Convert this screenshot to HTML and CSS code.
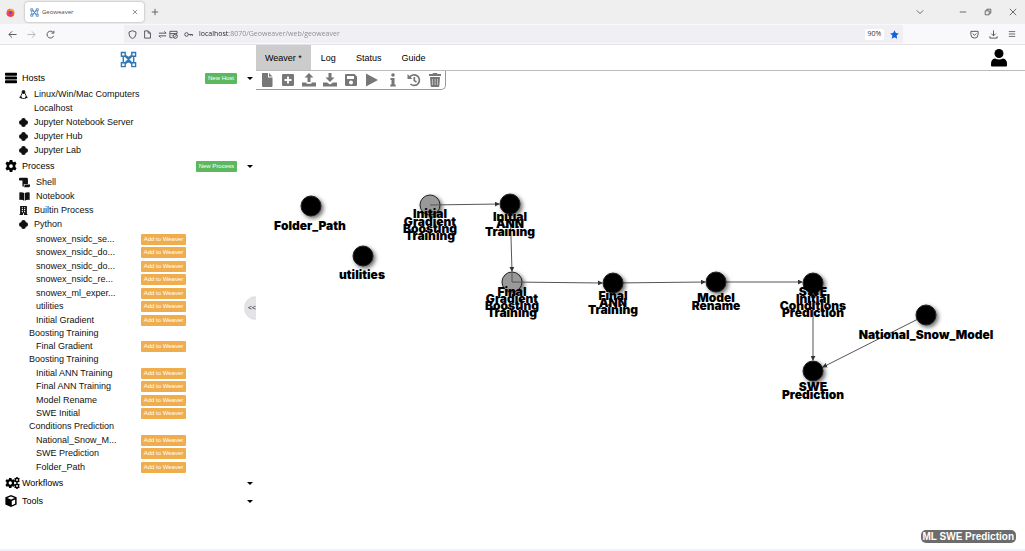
FILE: index.html
```html
<!DOCTYPE html>
<html lang="en">
<head>
<meta charset="utf-8">
<title>Geoweaver</title>
<link rel="stylesheet" href="styles.css">
</head>
<body>
<svg class="defs" aria-hidden="true">
  <symbol id="logo" viewBox="0 0 18 18"><g fill="none" stroke="currentColor" stroke-width="1.5"><path d="M1.5 1.5h4v4h-4zM12.500 1.5h4v4h-4zM1.500 12.500h4v4h-4zM12.500 12.500h4v4h-4zM3.500 5.500v7M14.500 5.500v7M5.500 5.500l7 7M12.500 5.500l-7 7M5.500 4.500l3.500 2.500 3.500-2.500M5.500 13.500l3.500-2.500 3.500 2.500"/></g></symbol>
  <symbol id="python" viewBox="0 0 16 16"><path d="M4 3.500Q4 0 8 0t4 3.500V4h.5Q16 4 16 8t-3.500 4H12v.5Q12 16 8 16t-4-3.500V12h-.5Q0 12 0 8t3.500-4H4z"/></symbol>
  <symbol id="cog" viewBox="0 0 16 16"><path fill-rule="evenodd" d="M6.300 0h3.400l.5 2.200 1.200.7 2.200-.8 1.800 3L13.800 6.600v2.800l1.600 1.500-1.800 3-2.200-.8-1.200.7-.5 2.200H6.300l-.5-2.200-1.200-.7-2.200.8-1.800-3 1.600-1.500V6.600L.6 5.100l1.800-3 2.200.8 1.200-.7zM8 5.500a2.500 2.500 0 1 0 0 5 2.500 2.500 0 0 0 0-5z"/></symbol>
</svg>

<header class="browser">
  <div class="tabstrip">
    <svg class="firefox" viewBox="0 0 16 16"><circle cx="8" cy="8.500" r="7" fill="#ff5a36"/><path d="M2 4l2-2 1 3 5-4q6 4 5 9-1-4-4-5z" fill="#ffbd2e"/><circle cx="8" cy="8.500" r="3.500" fill="#8a3fd1"/><path d="M1 8q0 7 7 7.500 5 0 6.500-4-4 3-8 1T1 8z" fill="#f5305b"/></svg>
    <div class="tab">
      <svg class="favicon" aria-hidden="true"><use href="#logo"/></svg>
      <span class="tab-title">Geoweaver</span>
      <button class="plain" aria-label="Close tab"><svg class="i6" viewBox="0 0 10 10"><path class="ln" d="M1.500 1.500l7 7M8.500 1.500l-7 7"/></svg></button>
    </div>
    <button class="plain new-tab" aria-label="New tab"><svg class="i8" viewBox="0 0 10 10"><path class="ln" d="M5 1v8M1 5h8"/></svg></button>
    <div class="window-controls">
      <button class="plain chevron" aria-label="List tabs"><svg class="i8" viewBox="0 0 10 10"><path class="ln" d="M1 3l4 4 4-4"/></svg></button>
      <button class="plain" aria-label="Minimize"><svg class="i8" viewBox="0 0 10 10"><path class="ln" d="M1 5h8"/></svg></button>
      <button class="plain" aria-label="Restore"><svg class="i8" viewBox="0 0 10 10"><path class="ln" d="M1.500 3.500h5v5h-5zM3.500 3V1.500h5v5H7"/></svg></button>
      <button class="plain" aria-label="Close"><svg class="i8" viewBox="0 0 10 10"><path class="ln" d="M1 1l8 8M9 1L1 9"/></svg></button>
    </div>
  </div>
  <div class="navbar">
    <div class="history">
      <button class="plain" aria-label="Back"><svg class="i9" viewBox="0 0 10 10"><path class="ln" d="M9.500 5H1M4.500 1.500L1 5l3.500 3.500"/></svg></button>
      <button class="plain faded" aria-label="Forward"><svg class="i9" viewBox="0 0 10 10"><path class="ln" d="M.5 5H9M5.500 1.500L9 5 5.500 8.500"/></svg></button>
      <button class="plain" aria-label="Reload"><svg class="i9" viewBox="0 0 10 10"><path class="ln" d="M8.500 6.500A3.800 3.800 0 1 1 8 2.800M8.800.8v2.700H6"/></svg></button>
    </div>
    <div class="urlbar">
      <svg class="i9" viewBox="0 0 10 10"><path class="ln" d="M5 .8l3.800 1.400v2.500Q8.800 8 5 9.500 1.200 8 1.200 4.700V2.200z"/></svg>
      <svg class="i9" viewBox="0 0 10 10"><path class="ln" d="M1.800 1h4l2.500 2.500V9H1.800zM5.800 1v2.500h2.500"/></svg>
      <svg class="i9" viewBox="0 0 10 10"><path class="ln" d="M1 3.500h8M7 1.500l2 2M9 6.500H1M3 8.500l-2-2"/></svg>
      <svg class="i9 snug" viewBox="0 0 10 10"><path class="ln" d="M4 8.500H1v-7h8V4M1 4h8M3 6h1"/><circle class="ln" cx="7" cy="7" r="2.300"/><path class="ln" d="M5.500 8.500l3-3"/></svg>
      <svg class="i9" viewBox="0 0 10 10"><circle class="ln" cx="2.800" cy="5" r="2"/><path class="ln" d="M4.800 5h4.700v1.500M7.500 5v1.500"/></svg>
      <input class="url" type="text" aria-label="Address" value="localhost:8070/Geoweaver/web/geoweaver">
      <button class="plain zoom">90%</button>
      <button class="plain star" aria-label="Bookmark"><svg class="i9" viewBox="0 0 20 20"><path fill="#0b61e0" d="M10 .5l3 6.300 6.700.8-5 4.800 1.300 6.900-6-3.400-6 3.400 1.300-6.900-5-4.800 6.700-.8z"/></svg></button>
    </div>
    <div class="nav-actions">
      <button class="plain" aria-label="Save to Pocket"><svg class="i9" viewBox="0 0 10 10"><path class="ln" d="M1 1.500h8v3.500a4 4 0 0 1-8 0zM3 4l2 2 2-2"/></svg></button>
      <button class="plain" aria-label="Downloads"><svg class="i9" viewBox="0 0 10 10"><path class="ln" d="M5 .5v6M2.500 4L5 6.500 7.500 4M1 7v2h8V7"/></svg></button>
      <button class="plain" aria-label="Menu"><svg class="i8" viewBox="0 0 10 10"><path class="ln" d="M1 2h8M1 5h8M1 8h8"/></svg></button>
    </div>
  </div>
</header>

<div class="app">
  <aside class="sidebar">
    <div class="brand"><svg class="brand-logo" aria-label="Geoweaver"><use href="#logo"/></svg></div>

    <div class="section">
      <svg class="i12" viewBox="0 0 16 16"><path d="M1 1h14q1 0 1 1v2q0 1-1 1H1Q0 5 0 4V2q0-1 1-1zM1 6h14q1 0 1 1v2q0 1-1 1H1q-1 0-1-1V7q0-1 1-1zM1 11h14q1 0 1 1v2q0 1-1 1H1q-1 0-1-1v-2q0-1 1-1z"/></svg>
      <span class="section-name">Hosts</span>
      <button class="btn green">New Host</button>
      <button class="plain caret" aria-label="Toggle Hosts"></button>
    </div>
    <ul class="tree">
      <li><svg class="i9" viewBox="0 0 16 16"><path fill="none" stroke="currentColor" stroke-width="1.500" d="M8 1q2.500 0 2.500 3.500 0 2 1.500 4.500t1 4L10 15H6l-3-2q-.5-1.500 1-4t1.500-4.500Q5.500 1 8 1z"/><path d="M5.500 1h5v5L8 7 5.500 6zM1 12l3-1 2 4-5-1zM15 12l-3-1-2 4 5-1z"/></svg><a href="#linux">Linux/Win/Mac Computers</a></li>
      <li class="no-icon"><a href="#localhost">Localhost</a></li>
      <li><svg class="i9"><use href="#python"/></svg><a href="#notebook-server">Jupyter Notebook Server</a></li>
      <li><svg class="i9"><use href="#python"/></svg><a href="#hub">Jupyter Hub</a></li>
      <li><svg class="i9"><use href="#python"/></svg><a href="#lab">Jupyter Lab</a></li>
    </ul>

    <div class="section">
      <svg class="i12"><use href="#cog"/></svg>
      <span class="section-name">Process</span>
      <button class="btn green">New Process</button>
      <button class="plain caret" aria-label="Toggle Process"></button>
    </div>
    <ul class="tree">
      <li><svg class="i11" viewBox="0 0 16 16"><path d="M0 2q0-1 2-1h9q2 0 2 2v7H7v3q0 1-1 1t-1-1V5H1Q0 5 0 3.500zM8 11h8v2q0 2-2 2H7q1-1 1-2z"/></svg><a href="#shell">Shell</a></li>
      <li><svg class="i11" viewBox="0 0 16 16"><path d="M.5 2Q5 1.500 7.500 3v11Q5 12.500 .5 13zM15.500 2Q11 1.500 8.500 3v11q2.500-1.500 7-1z"/></svg><a href="#nb">Notebook</a></li>
      <li><svg class="i9" viewBox="0 0 16 16"><path fill-rule="evenodd" d="M2 0h12v14h1v2H9v-3H7v3H1v-2h1zM5 2v2h2V2zM9 2v2h2V2zM5 5.500v2h2v-2zM9 5.500v2h2v-2zM5 9v2h2V9zM9 9v2h2V9z"/></svg><a href="#builtin">Builtin Process</a></li>
      <li><svg class="i9"><use href="#python"/></svg><a href="#python-list">Python</a></li>
    </ul>
    <ul class="processes" id="python-list">
      <li><a href="#p1">snowex_nsidc_se...</a><button class="btn orange">Add to Weaver</button></li>
      <li><a href="#p2">snowex_nsidc_do...</a><button class="btn orange">Add to Weaver</button></li>
      <li><a href="#p3">snowex_nsidc_do...</a><button class="btn orange">Add to Weaver</button></li>
      <li><a href="#p4">snowex_nsidc_re...</a><button class="btn orange">Add to Weaver</button></li>
      <li><a href="#p5">snowex_ml_exper...</a><button class="btn orange">Add to Weaver</button></li>
      <li><a href="#p6">utilities</a><button class="btn orange">Add to Weaver</button></li>
      <li><a href="#p7">Initial Gradient<br>Boosting Training</a><button class="btn orange">Add to Weaver</button></li>
      <li><a href="#p8">Final Gradient<br>Boosting Training</a><button class="btn orange">Add to Weaver</button></li>
      <li><a href="#p9">Initial ANN Training</a><button class="btn orange">Add to Weaver</button></li>
      <li><a href="#p10">Final ANN Training</a><button class="btn orange">Add to Weaver</button></li>
      <li><a href="#p11">Model Rename</a><button class="btn orange">Add to Weaver</button></li>
      <li><a href="#p12">SWE Initial<br>Conditions Prediction</a><button class="btn orange">Add to Weaver</button></li>
      <li><a href="#p13">National_Snow_M...</a><button class="btn orange">Add to Weaver</button></li>
      <li><a href="#p14">SWE Prediction</a><button class="btn orange">Add to Weaver</button></li>
      <li><a href="#p15">Folder_Path</a><button class="btn orange">Add to Weaver</button></li>
    </ul>

    <div class="section">
      <svg class="cogs" viewBox="0 0 20 16"><svg y="1" width="14" height="14"><use href="#cog"/></svg><svg x="12" y="0" width="8" height="8"><use href="#cog"/></svg><svg x="12" y="8" width="8" height="8"><use href="#cog"/></svg></svg>
      <span class="section-name">Workflows</span>
      <button class="plain caret" aria-label="Toggle Workflows"></button>
    </div>
    <div class="section">
      <svg class="i12" viewBox="0 0 16 16"><path fill-rule="evenodd" d="M8 0l7.500 3v9.500L8 16 .5 12.500V3zM8 2L3 4l5 2 5-2zM9 8v5.500l4.500-2V6z"/></svg>
      <span class="section-name">Tools</span>
      <button class="plain caret" aria-label="Toggle Tools"></button>
    </div>
    <button class="plain collapse" aria-label="Collapse sidebar">&lt;&lt;</button>
  </aside>

  <main class="main">
    <nav class="menu">
      <button class="plain menu-tab active">Weaver *</button>
      <button class="plain menu-tab">Log</button>
      <button class="plain menu-tab">Status</button>
      <button class="plain menu-tab">Guide</button>
      <button class="plain user" aria-label="Account"><svg class="user-icon" viewBox="0 0 16 18"><circle cx="8" cy="4.500" r="4.500"/><path d="M0 15q0-5 4-5.500 4 2 8 0 4 .5 4 5.500v1.500q0 1-1 1H1q-1 0-1-1z"/></svg></button>
    </nav>
    <div class="canvas">
      <svg class="graph" role="img" aria-label="ML SWE Prediction workflow">
        <defs>
          <marker id="arrow" viewBox="0 0 6 6" refX="5" refY="3" markerWidth="5" markerHeight="5" markerUnits="userSpaceOnUse" orient="auto"><path d="M0 0l6 3-6 3z" fill="#333"/></marker>
        </defs>
        <g class="nodes pending"><circle cx="174" cy="134" r="10"/><circle cx="256" cy="211" r="10"/></g>
        <g class="edges">
          <path d="M174 134L243 133"/><path d="M254 133L256 200"/><path class="tail" d="M256 200V211"/>
          <path d="M256 211L346 212"/><path d="M357 212L449 211"/><path d="M460 211L546 211"/>
          <path d="M557 211V289"/><path d="M670 244L567 296"/>
        </g>
        <g class="nodes">
          <circle cx="55" cy="135" r="10"/><circle cx="107" cy="185" r="10"/><circle cx="254" cy="133" r="10"/>
          <circle cx="357" cy="212" r="10"/><circle cx="460" cy="211" r="10"/><circle cx="557" cy="212" r="10"/>
          <circle cx="557" cy="300" r="10"/><circle cx="670" cy="244" r="10"/>
        </g>
        <g class="labels">
          <text x="54" y="159">Folder_Path</text>
          <text x="106" y="208">utilities</text>
          <text><tspan x="174" y="147">Initial</tspan><tspan x="174" y="155">Gradient</tspan><tspan x="174" y="162">Boosting</tspan><tspan x="174" y="169">Training</tspan></text>
          <text><tspan x="254" y="150">Initial</tspan><tspan x="254" y="157">ANN</tspan><tspan x="254" y="165">Training</tspan></text>
          <text><tspan x="256" y="225">Final</tspan><tspan x="256" y="232">Gradient</tspan><tspan x="256" y="239">Boosting</tspan><tspan x="256" y="246">Training</tspan></text>
          <text><tspan x="357" y="229">Final</tspan><tspan x="357" y="236">ANN</tspan><tspan x="357" y="243">Training</tspan></text>
          <text><tspan x="460" y="231">Model</tspan><tspan x="460" y="239">Rename</tspan></text>
          <text><tspan x="557" y="225">SWE</tspan><tspan x="557" y="232">Initial</tspan><tspan x="557" y="239">Conditions</tspan><tspan x="557" y="246">Prediction</tspan></text>
          <text><tspan x="557" y="320">SWE</tspan><tspan x="557" y="328">Prediction</tspan></text>
          <text x="670" y="268">National_Snow_Model</text>
        </g>
      </svg>
      <div class="toolbar">
        <button class="plain" aria-label="New"><svg class="i14" viewBox="0 0 14 14"><path d="M2 0h6v4.500h4.500V13q0 1-1 1H3q-1 0-1-1zM9 0l3.500 3.500H9z"/></svg></button>
        <button class="plain" aria-label="Add"><svg class="i14" viewBox="0 0 14 14"><path fill-rule="evenodd" d="M2 1h10q1 0 1 1v10q0 1-1 1H2q-1 0-1-1V2q0-1 1-1zM6 3.500V6H3.500v2H6v2.500h2V8h2.500V6H8V3.500z"/></svg></button>
        <button class="plain" aria-label="Upload"><svg class="i14" viewBox="0 0 14 14"><path d="M7 0l4.500 4.500h-3V9h-3V4.500h-3zM0 9.500h4.500v1.200h5V9.500H14v4H0z"/></svg></button>
        <button class="plain" aria-label="Download"><svg class="i14" viewBox="0 0 14 14"><path d="M5.500 0h3v4.500h3L7 9 2.500 4.500h3zM0 9.500h4l3 2 3-2h4v4H0z"/></svg></button>
        <button class="plain" aria-label="Save"><svg class="i14" viewBox="0 0 14 14"><path fill-rule="evenodd" d="M2 1h8.500L13 3.500V12q0 1-1 1H2q-1 0-1-1V2q0-1 1-1zM3 3v3h7V3zM7 7.500a2 2 0 1 0 0 4 2 2 0 0 0 0-4z"/></svg></button>
        <button class="plain" aria-label="Run"><svg class="i14" viewBox="0 0 14 14"><path d="M1 .5L13 7 1 13.500z"/></svg></button>
        <button class="plain" aria-label="Information"><svg class="i14" viewBox="0 0 14 14"><circle cx="7" cy="2" r="1.800"/><path d="M4.500 5h4v6.500h1.200v2H4.300v-2h1.200V7h-1z"/></svg></button>
        <button class="plain" aria-label="History"><svg class="i14" viewBox="0 0 14 14"><path fill="none" stroke="currentColor" stroke-width="1.700" d="M2.500 4.500A5.300 5.300 0 1 1 3.500 11M7.300 4v3.500l2.200 1.500"/><path d="M.5 1v5h5z"/></svg></button>
        <button class="plain" aria-label="Delete"><svg class="i14" viewBox="0 0 14 14"><path fill-rule="evenodd" d="M1 1h3.500L5 0h4l.5 1H13v2H1zM2 4h10l-.7 9q0 1-1 1H3.700q-1 0-1-1zM4.500 6v6h.5V6zM6.800 6v6h.5V6zM9 6v6h.5V6z"/></svg></button>
      </div>
      <div class="workflow-name">ML SWE Prediction</div>
    </div>
  </main>
</div>
</body>
</html>
```

FILE: styles.css
```css
* { box-sizing: border-box; }

body {
  margin: 0;
  min-height: 100vh;
  display: flex;
  flex-direction: column;
  overflow: hidden;
  background: #fff;
  color: #111;
  font: 9px/14px "Liberation Sans", Arial, sans-serif;
}

svg { display: block; flex: none; fill: currentColor; }
a { color: inherit; text-decoration: none; }
ul { margin: 0; padding: 0; list-style: none; }

.defs { position: absolute; width: 0; height: 0; }
.ln { fill: none; stroke: currentColor; stroke-width: 1; }

.plain {
  margin: 0;
  padding: 0;
  border: 0;
  background: none;
  color: inherit;
  font: inherit;
  display: flex;
  align-items: center;
  justify-content: center;
}

.i6 { width: 6px; height: 6px; }
.i8 { width: 8px; height: 8px; }
.i9 { width: 9px; height: 9px; }
.i11 { width: 11px; height: 11px; }
.i12 { width: 12px; height: 12px; }
.i14 { width: 14px; height: 14px; }

/* Browser frame */
.browser {
  color: #4a4a50;
  font-family: "Open Sans", "Noto Sans", sans-serif;
  font-size: 7px;
}
.tabstrip {
  display: flex;
  align-items: center;
  height: 24px;
  background: #efefef;
}
.firefox { width: 9px; height: 9px; margin: 0 6px; }
.tab {
  display: flex;
  align-items: center;
  gap: 3px;
  width: 119px;
  height: 20px;
  margin-left: 4px;
  padding: 0 6px 0 5px;
  border-radius: 3px;
  background: #fff;
  box-shadow: 0 0 2px #888;
}
.favicon { width: 9px; height: 9px; color: #3c78b4; }
.tab-title { flex: 1; font-size: 6px; }
.new-tab { margin-left: 7px; }
.window-controls {
  display: flex;
  gap: 17px;
  margin-left: auto;
  padding-right: 8px;
}
.chevron { margin-right: 18px; }
.navbar {
  display: flex;
  align-items: center;
  height: 21px;
  background: #f9f9fb;
  border-bottom: 1px solid #e2e2e6;
}
.history {
  display: flex;
  gap: 10px;
  width: 124px;
  padding-left: 8px;
}
.faded { opacity: 0.4; }
.urlbar {
  flex: 1;
  display: flex;
  align-items: center;
  gap: 6px;
  height: 18px;
  padding: 0 4px;
  border-radius: 2px;
  background: #f0f0f4;
}
.snug { margin-left: -4px; }
.url {
  flex: 1;
  min-width: 0;
  padding: 0;
  border: 0;
  outline: 0;
  font: 7px/14px "Open Sans", "Noto Sans", sans-serif;
  background: linear-gradient(to right, #222 30px, #86868c 30px);
  background-clip: text;
  -webkit-background-clip: text;
  color: transparent;
}
.zoom {
  width: 19px;
  height: 11px;
  border-radius: 2px;
  background: #fff;
  color: #333;
}
.nav-actions {
  display: flex;
  gap: 10px;
  padding: 0 9px 0 67px;
}

/* Application */
.app { flex: 1; display: flex; border-bottom: 2px solid #eef3fa; }

.sidebar {
  position: relative;
  flex: none;
  width: 256px;
  overflow: hidden;
}
.brand {
  display: flex;
  align-items: center;
  justify-content: center;
  height: 24px;
  padding-top: 4px;
}
.brand-logo { width: 17px; height: 17px; color: #2f77b5; }

.section {
  display: flex;
  align-items: center;
  height: 18px;
  padding: 0 3px 0 5px;
  color: #000;
}
.section-name { flex: 1; padding-left: 5px; }
.cogs { width: 15px; height: 12px; }
.cogs + .section-name { padding-left: 2px; }
.caret { width: 7px; height: 8px; margin-left: 9px; }
.caret::before {
  content: "";
  border: 3px solid transparent;
  border-top-color: #000;
  border-bottom: 0;
}

.btn {
  border: 0;
  border-radius: 1px;
  padding: 0 3px;
  height: 11px;
  color: #fff;
  font: 6px/11px "Liberation Sans", Arial, sans-serif;
  white-space: nowrap;
}
.green { background: #5cb85c; }
.orange { background: #f0ad4e; width: 45px; padding: 0; }

.tree li {
  display: flex;
  align-items: center;
  gap: 6px;
  height: 14px;
  padding-left: 19px;
}
.tree .no-icon { padding-left: 34px; }

.processes { padding-top: 2px; line-height: 13px; }
.processes li {
  display: flex;
  align-items: flex-start;
  padding-left: 29px;
}
.processes li:nth-child(even) { padding-bottom: 1px; }
.processes a { width: 112px; text-indent: 7px; }
.processes .btn { margin-top: 1px; }

.collapse {
  position: absolute;
  top: 252px;
  right: -11px;
  width: 22px;
  height: 22px;
  padding-right: 8px;
  border-radius: 50%;
  background: #e4e4e8;
  box-shadow: 0 0 2px #aaa;
  font-size: 7px;
}

.main { flex: 1; min-width: 0; display: flex; flex-direction: column; }
.menu {
  display: flex;
  height: 26px;
  border-bottom: 1px solid #bbb;
  color: #000;
}
.menu-tab { padding: 0 10px; }
.active { background: #ccc; padding: 0 9px; }
.user { margin-left: auto; padding-right: 18px; }
.user-icon { width: 16px; height: 18px; }

.canvas { position: relative; flex: 1; display: flex; }
.graph { flex: 1; min-width: 0; }
.toolbar {
  position: absolute;
  top: 0;
  left: 0;
  display: flex;
  height: 19px;
  border: solid #999;
  border-width: 0 1px 1px 0;
  border-radius: 0 0 5px 0;
  color: #777;
}
.toolbar button { width: 21px; }

.nodes circle {
  filter: drop-shadow(2px 2px 2px rgba(0, 0, 0, 0.6));
  fill: #000;
  stroke: #222;
  stroke-width: 1;
}
.nodes.pending circle { fill: #999; }
.edges path { stroke: #555; stroke-width: 1; fill: none; marker-end: url(#arrow); }
.edges .tail { marker-end: none; }
.labels text {
  fill: #000;
  font: 900 12px Inter, "Liberation Sans", sans-serif;
  text-anchor: middle;
}

.workflow-name {
  position: absolute;
  right: 9px;
  bottom: 6px;
  padding: 0 2px;
  border-radius: 5px;
  background: #6c6c6c;
  color: #fff;
  font: bold 10px/13px "Liberation Sans", Arial, sans-serif;
}
```
